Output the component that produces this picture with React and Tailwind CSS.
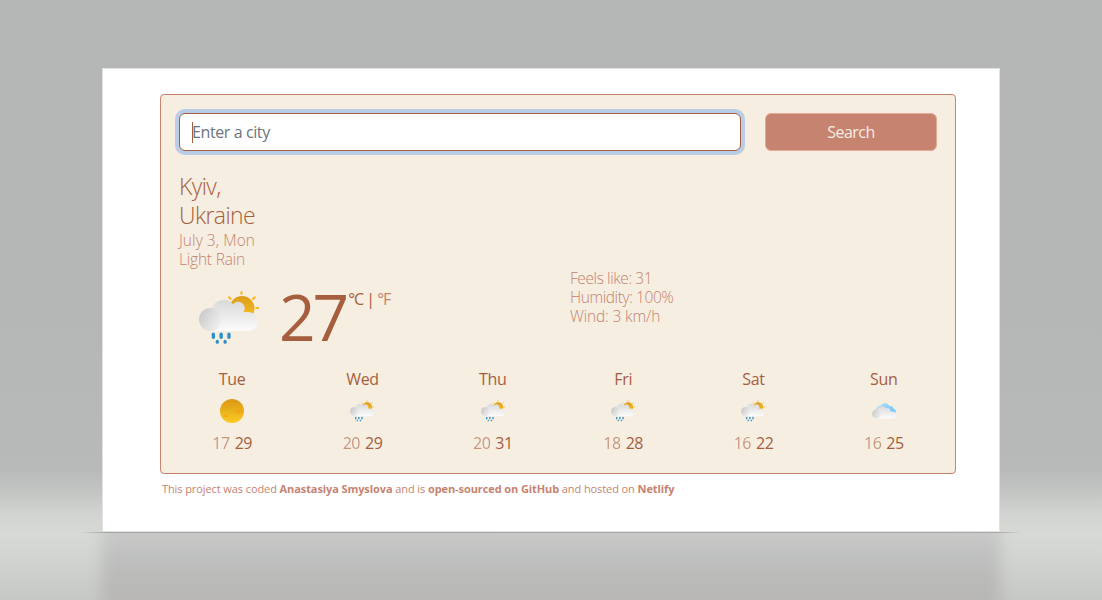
import React from "react";

function RainIcon({ id, className }) {
  return (
    <svg viewBox="0 0 60 54" className={className} fill="none">
      <defs>
        <linearGradient id={id + "sun"} x1="0" y1="0" x2="0" y2="1">
          <stop offset="0" stopColor="#dd9c1c" />
          <stop offset="1" stopColor="#fbc421" />
        </linearGradient>
        <linearGradient id={id + "cloud"} x1="0" y1="0" x2="0" y2="1">
          <stop offset="0" stopColor="#d9d9d9" />
          <stop offset="1" stopColor="#fcfcfc" />
        </linearGradient>
        <linearGradient id={id + "puff"} x1="0" y1="0" x2="1" y2="0.6">
          <stop offset="0" stopColor="#c4c4c4" />
          <stop offset="1" stopColor="#f0f0f0" />
        </linearGradient>
      </defs>
      <g stroke="#fdb51c" strokeWidth="2" strokeLinecap="round">
        <path d="M42.500 1v2M30 6.200l1.600 1.600M55.700 6.200l-1.900 1.900M57.300 17h2" />
      </g>
      <circle cx="43" cy="17.5" r="12.5" fill={`url(#${id}sun)`} />
      <path
        d="M11 40a11 11 0 0 1 2-22a12 12 0 0 1 21-4.600a6 6 0 0 1 10.500 7.600h5a9.500 9.500 0 0 1 0 19z"
        fill={`url(#${id}cloud)`}
      />
      <circle cx="11.5" cy="28.500" r="11.500" fill={`url(#${id}puff)`} />
      <g fill="#2b8fcc">
        <rect x="12.700" y="41.500" width="3.300" height="6.500" rx="1.650" />
        <rect x="20.500" y="41.500" width="3.300" height="6.500" rx="1.650" />
        <rect x="28.300" y="41.500" width="3.300" height="6.500" rx="1.650" />
        <rect x="16.700" y="48.800" width="3.200" height="4" rx="1.600" />
        <rect x="24.500" y="48.800" width="3.200" height="4" rx="1.600" />
      </g>
    </svg>
  );
}

function SunIcon() {
  return (
    <svg viewBox="0 0 24 24" className="size-6">
      <defs>
        <linearGradient id="fullsun" x1="0" y1="0" x2="0" y2="1">
          <stop offset="0" stopColor="#d89814" />
          <stop offset="1" stopColor="#fdca22" />
        </linearGradient>
      </defs>
      <circle cx="12" cy="12" r="12" fill="url(#fullsun)" />
      <g fill="#f39a16" opacity="0.5">
        <rect x="4" y="4" width="6" height="3.500" rx="1.700" />
        <rect x="15" y="10.500" width="8.500" height="3.500" rx="1.700" />
        <rect x="4" y="16" width="4" height="2" rx="1" />
      </g>
    </svg>
  );
}

function CloudIcon() {
  return (
    <svg viewBox="0 0 24 16" className="h-4 w-6">
      <defs>
        <linearGradient id="skyback" x1="0" y1="0" x2="1" y2="0.5">
          <stop offset="0" stopColor="#b5e3fb" />
          <stop offset="1" stopColor="#76c7fa" />
        </linearGradient>
        <linearGradient id="cloudfront" x1="0" y1="0" x2="0" y2="1">
          <stop offset="0" stopColor="#dadada" />
          <stop offset="1" stopColor="#fcfcfc" />
        </linearGradient>
        <linearGradient id="cloudpuff" x1="0" y1="0" x2="1" y2="0.6">
          <stop offset="0" stopColor="#c6c6c6" />
          <stop offset="1" stopColor="#ededed" />
        </linearGradient>
      </defs>
      <path d="M4 8a5 5 0 0 1 4.500-5.500a5.500 5.500 0 0 1 9 .4a3.800 3.800 0 0 1 4 2.600q2.500.8 2.500 4H6z" fill="url(#skyback)" />
      <path d="M4 15.500a4.500 4.500 0 0 1 1.200-8.800a5 5 0 0 1 9-1.200a2.500 2.500 0 0 1 3.800 2.900h2.500a3.550 3.550 0 0 1 0 7.100z" fill="url(#cloudfront)" />
      <circle cx="4.500" cy="11" r="4.500" fill="url(#cloudpuff)" />
    </svg>
  );
}

const forecast = [
  { day: "Tue", low: 17, high: 29, icon: "sun" },
  { day: "Wed", low: 20, high: 29, icon: "rain" },
  { day: "Thu", low: 20, high: 31, icon: "rain" },
  { day: "Fri", low: 18, high: 28, icon: "rain" },
  { day: "Sat", low: 16, high: 22, icon: "rain" },
  { day: "Sun", low: 16, high: 25, icon: "cloud" },
];

function Day({ day, low, high, icon }) {
  return (
    <div className="flex flex-col items-center text-[#a65e3f]">
      <div className="h-6 text-base leading-6 tracking-[-0.3px]">{day}</div>
      <div className="mt-2 flex h-6 items-center justify-center">
        {icon === "sun" && <SunIcon />}
        {icon === "rain" && <RainIcon id={day} className="h-[22px] w-6" />}
        {icon === "cloud" && <CloudIcon />}
      </div>
      <div className="mt-2 flex gap-[5px] text-base leading-6 tracking-[-0.5px]">
        <span className="opacity-60">{low}</span>
        <span>{high}</span>
      </div>
    </div>
  );
}

export default function App() {
  return (
    <div className="relative isolate flex h-[600px] w-[1102px] flex-col overflow-hidden bg-[linear-gradient(to_bottom,#b5b7b6_0px,#b4b7b5_300px,#b8bab9_470px,#c2c5c2_492px,#d0d3cf_512px,#d6d9d4_535px,#d2d5d1_555px,#c5c8c5_600px)] pt-[68px] font-['Open_Sans','Noto_Sans',sans-serif]">
      <div className="absolute top-[532px] left-0 -z-10 h-[68px] w-full overflow-hidden">
        <div className="mx-auto -mt-8 h-[140px] w-[898px] bg-[linear-gradient(to_bottom,#c9cbc8_32px,#bfc0c0_54px,#b9b9b7_84px,#b8b7b5_104px)] blur-[7px]" />
      </div>
      <div className="absolute top-[532px] left-[80px] h-px w-[942px] bg-[linear-gradient(to_right,transparent,#a5a7a6_24px,#a9aaa9_918px,transparent)]" />

      <main className="ml-[102px] flex h-[464px] w-[898px] flex-col border border-[#e0e1e0] bg-white pt-[25px] pl-[57px]">
        <section className="h-[380px] w-[796px] rounded-[4px] border border-[#c58370] bg-[#f6eee0] pt-[18px]">
          <form className="flex h-[38px] gap-6 pl-[18px]" onSubmit={(e) => e.preventDefault()}>
            <div className="flex w-[562px] items-center rounded-[6px] border border-[#a65e3f] bg-white pl-3 ring-4 ring-[#b9cde8]">
              <span className="h-[21px] w-px bg-[#a65e3f]" />
              <span className="-ml-px text-base leading-6 tracking-[-0.4px] text-[#6c757d]">Enter a city</span>
            </div>
            <button className="w-[172px] rounded-[6px] border border-[#e3ab96] bg-[#c58370] text-base leading-6 tracking-[-0.5px] text-[#f6eee0]">
              Search
            </button>
          </form>

          <div className="mt-[21px] flex h-[182px] pl-[18px]">
            <div className="w-[391px] font-light text-[#c58370]">
              <h1 className="w-24 text-[23px] leading-[29px] tracking-[-0.6px] text-[#a65e3f]">Kyiv, Ukraine</h1>
              <div className="pt-px text-[15.5px] leading-[19px] tracking-[0.05px]">July 3, Mon</div>
              <div className="text-[15.5px] leading-[19px] tracking-[-0.2px]">Light Rain</div>
              <div className="mt-[22px] flex pl-5">
                <RainIcon id="now" className="h-[54px] w-[60px]" />
                <div className="ml-5 -mt-[8px] text-[64px] leading-[68px] font-normal tracking-[-3px] text-[#a65e3f]">
                  27
                </div>
                <div className="ml-[2px] -mt-px text-base leading-[19px] tracking-[-1px] whitespace-nowrap">
                  <span className="font-normal text-[#a65e3f]">°C | </span>
                  <span className="font-normal">°F</span>
                </div>
              </div>
            </div>
            <ul className="mt-[97px] text-[15.5px] leading-[19px] font-light tracking-[-0.42px] text-[#c58370]">
              <li>Feels like: 31</li>
              <li>Humidity: 100%</li>
              <li className="tracking-[-0.15px]">Wind: 3 km/h</li>
            </ul>
          </div>

          <div className="mt-[13px] ml-[6px] grid w-[782px] grid-cols-6">
            {forecast.map((item) => (
              <Day key={item.day} {...item} />
            ))}
          </div>
        </section>
        <footer className="mt-[6px] ml-[2px] text-[11px] leading-[18px] tracking-[-0.09px] whitespace-nowrap text-[#c58370]">
          This project was coded <b>Anastasiya Smyslova</b> and is <b>open-sourced on GitHub</b> and hosted on <b>Netlify</b>
        </footer>
      </main>
    </div>
  );
}
